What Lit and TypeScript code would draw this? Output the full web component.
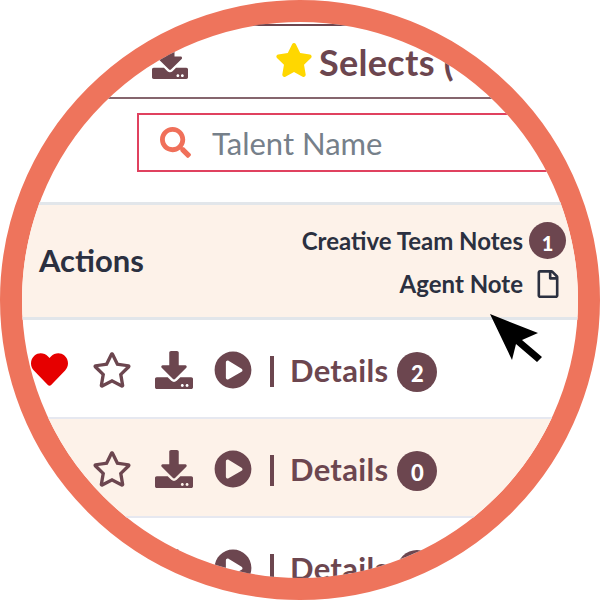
import { LitElement, html, css, svg } from "lit";
import { customElement } from "lit/decorators.js";

const icon = (vb: string, d: string, cls: string) =>
  html`<svg class=${cls} viewBox=${vb} aria-hidden="true">${svg`<path d=${d}></path>`}</svg>`;

const DOWNLOAD = "M216 0h80c13.3 0 24 10.7 24 24v168h87.7c17.8 0 26.7 21.5 14.1 34.1L269.7 378.3c-7.5 7.5-19.8 7.5-27.3 0L90.1 226.1c-12.6-12.6-3.7-34.1 14.1-34.1H192V24c0-13.3 10.7-24 24-24zm296 376v112c0 13.3-10.7 24-24 24H24c-13.3 0-24-10.7-24-24V376c0-13.3 10.7-24 24-24h146.7l49 49c20.1 20.1 52.5 20.1 72.6 0l49-49H488c13.3 0 24 10.7 24 24zm-124 88c0-11-9-20-20-20s-20 9-20 20 9 20 20 20 20-9 20-20zm64 0c0-11-9-20-20-20s-20 9-20 20 9 20 20 20 20-9 20-20z";
const STAR_O = "M528.1 171.5L382 150.2 316.7 17.8c-11.7-23.6-45.6-23.9-57.4 0L194 150.2 47.9 171.5c-26.2 3.8-36.7 36.1-17.7 54.6l105.7 103-25 145.5c-4.5 26.3 23.2 46 46.4 33.7L288 439.6l130.7 68.7c23.2 12.2 50.9-7.4 46.4-33.7l-25-145.5 105.7-103c19-18.5 8.5-50.8-17.7-54.6zM388.6 312.3l23.7 138.4L288 385.4l-124.3 65.3 23.7-138.4-100.6-98 139-20.2 62.2-126 62.2 126 139 20.2-100.6 98z";
const STAR = "M259.3 17.8L194 150.2 47.9 171.5c-26.2 3.8-36.7 36.1-17.7 54.6l105.7 103-25 145.5c-4.5 26.3 23.2 46 46.4 33.7L288 439.6l130.7 68.7c23.2 12.2 50.9-7.4 46.4-33.7l-25-145.5 105.7-103c19-18.5 8.5-50.8-17.7-54.6L382 150.2 316.7 17.8c-11.7-23.6-45.6-23.9-57.4 0z";
const HEART = "M462.3 62.6C407.5 15.9 326 24.3 275.7 76.2L256 96.5l-19.7-20.3C186.1 24.3 104.5 15.9 49.7 62.6c-62.8 53.6-66.1 149.8-9.9 207.9l193.5 199.8c12.5 12.9 32.8 12.9 45.3 0l193.5-199.8c56.3-58.1 53-154.3-9.8-207.9z";
const PLAY = "M256 8C119 8 8 119 8 256s111 248 248 248 248-111 248-248S393 8 256 8zm115.7 272l-176 101c-15.8 8.8-35.7-2.5-35.7-20.8V152c0-18.4 19.8-29.6 35.7-20.8l176 107c16.4 9.2 16.4 32.9 0 42z";
const SEARCH = "M505 442.7L405.3 343c-4.5-4.5-10.6-7-17-7H372c27.6-35.3 44-79.7 44-128C416 93.1 322.9 0 208 0S0 93.1 0 208s93.1 208 208 208c48.3 0 92.7-16.4 128-44v16.3c0 6.4 2.5 12.5 7 17l99.7 99.7c9.4 9.4 24.6 9.4 33.9 0l28.3-28.3c9.4-9.4 9.4-24.6.1-34zM208 336c-70.7 0-128-57.2-128-128 0-70.7 57.2-128 128-128 70.7 0 128 57.2 128 128 0 70.7-57.2 128-128 128z";
const FILE = "M369.9 97.9L286 14C277 5 264.8-.1 252.1-.1H48C21.5 0 0 21.5 0 48v416c0 26.5 21.5 48 48 48h288c26.5 0 48-21.5 48-48V131.9c0-12.7-5.1-25-14.1-34zM332.1 128H256V51.9l76.1 76.1zM48 464V48h160v104c0 13.3 10.7 24 24 24h104v288H48z";

@customElement("app-root")
export class AppRoot extends LitElement {
  static styles = css`
    :host {
      display: block;
      width: 600px;
      height: 600px;
      background: #fff;
      font-family: "Lato", "Open Sans", sans-serif;
      color: #6c464f;
    }
    svg { display: block; fill: currentColor; flex: none; }
    .lens {
      position: relative;
      box-sizing: border-box;
      width: 600px;
      height: 600px;
      border: 22px solid #ee745c;
      border-radius: 50%;
      overflow: hidden;
      background: #fff;
    }
    .top {
      box-sizing: border-box;
      height: 75px;
      margin-top: 2px;
      border-top: 2px solid #6c464f;
      border-bottom: 2px solid #85656d;
      display: flex;
      align-items: center;
      padding-left: 130px;
    }
    .top-dl { width: 36px; height: 36px; margin-top: -2px; }
    .top-star { width: 38px; height: 34px; color: #ffd700; margin: -3px 0 0 87px; }
    .top-title {
      margin-left: 6px;
      font-size: 36px;
      font-weight: 700;
      white-space: nowrap;
      letter-spacing: 0.3px;
    }
    .search {
      box-sizing: border-box;
      width: 600px;
      height: 59px;
      margin: 14px 0 30px 115px;
      border: 2px solid #e0415f;
      display: flex;
      align-items: center;
      padding-left: 21px;
      gap: 21px;
    }
    .search-icon { width: 31px; height: 31px; color: #f0705a; }
    .search-text { font-size: 31px; color: #76808a; font-weight: 400; }
    .thead {
      box-sizing: border-box;
      height: 118px;
      border-top: 3px solid #e2e6ea;
      border-bottom: 3px solid #e2e6ea;
      background: #fdf2e9;
      display: flex;
      align-items: center;
      justify-content: space-between;
      padding: 0 12px 2px 17px;
      color: #2b3040;
      font-weight: 700;
    }
    .th-actions { font-size: 31px; }
    .notes { display: flex; flex-direction: column; align-items: flex-end; gap: 10px; font-size: 24px; }
    .note { display: flex; align-items: center; }
    .note-b { margin-left: 6px; }
    .note-b .badge { width: 37px; height: 37px; font-size: 20px; }
    .file { width: 22px; height: 28px; margin: 0 7px 0 14px; }
    .tr {
      box-sizing: border-box;
      height: 99px;
      border-bottom: 2px solid #e6e8f0;
      display: flex;
      align-items: center;
      padding: 2px 0 0 9px;
    }
    .tr.alt { background: #fdf2e9; }
    .heart { width: 37px; height: 37px; color: #e60000; }
    .slot { width: 37px; }
    .star { width: 40px; height: 36px; margin-left: 24px; }
    .dl { width: 38px; height: 38px; margin-left: 23px; }
    .play { width: 38px; height: 38px; margin-left: 21px; }
    .sep { width: 4px; height: 31px; background: #6c464f; margin: 4px 0 0 18px; }
    .details { margin-left: 16px; font-size: 31px; font-weight: 700; letter-spacing: 0.3px; }
    .badge {
      width: 40px;
      height: 40px;
      border-radius: 50%;
      background: #6c464f;
      color: #fff;
      font-size: 22px;
      font-weight: 900;
      display: flex;
      align-items: center;
      justify-content: center;
      padding-top: 4px;
      box-sizing: border-box;
    }
    .tr .badge { margin: 4px 0 0 9px; }
    .cursor { position: absolute; left: 466px; top: 291px; width: 56px; height: 50px; fill: #000; }
  `;

  private row(count: string, alt: boolean, liked: boolean) {
    return html`<div class="tr ${alt ? "alt" : ""}">
      ${liked ? icon("0 0 512 512", HEART, "heart") : html`<span class="slot"></span>`}
      ${icon("0 0 576 512", STAR_O, "star")}
      ${icon("0 0 512 512", DOWNLOAD, "dl")}
      ${icon("0 0 512 512", PLAY, "play")}
      <span class="sep"></span>
      <span class="details">Details</span>
      <span class="badge">${count}</span>
    </div>`;
  }

  render() {
    return html`<div class="lens">
      <div class="top">
        ${icon("0 0 512 512", DOWNLOAD, "top-dl")}
        ${icon("0 0 576 512", STAR, "top-star")}
        <span class="top-title">Selects (</span>
      </div>
      <div class="search">
        ${icon("0 0 512 512", SEARCH, "search-icon")}
        <span class="search-text">Talent Name</span>
      </div>
      <div class="thead">
        <span class="th-actions">Actions</span>
        <div class="notes">
          <div class="note">Creative Team Notes<span class="note-b"><span class="badge">1</span></span></div>
          <div class="note">Agent Note${icon("0 0 384 512", FILE, "file")}</div>
        </div>
      </div>
      ${this.row("2", false, true)}
      ${this.row("0", true, false)}
      ${this.row("1", false, false)}
      <svg class="cursor" viewBox="0 0 56 50">
        <path d="M2 1 L50 20 L34 27 L54 44 L49 49 L28 31 L24 47 Z"></path>
      </svg>
    </div>`;
  }
}
